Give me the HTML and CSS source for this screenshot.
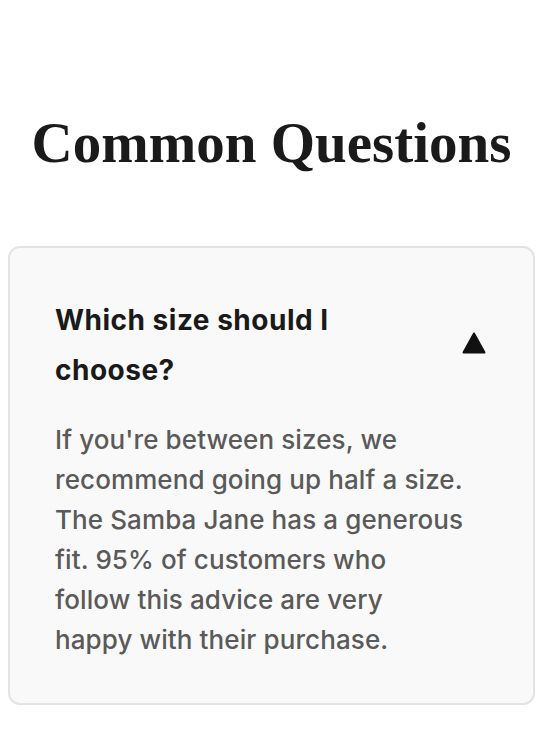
FILE: index.html
```html
<!DOCTYPE html>
<html>
<head>
<meta charset="utf-8">
<link rel="stylesheet" href="styles.css">
</head>
<body>
<main class="page">
  <h1 class="title">Common Questions</h1>
  <section class="faq">
    <div class="faq-head">
      <h2 class="question">Which size should I choose?</h2>
      <svg class="toggle" width="24" height="22" viewBox="0 0 24 22"><path d="M12 1.5 L22.5 20.5 L1.5 20.5 Z" fill="#111" stroke="#111" stroke-width="2" stroke-linejoin="round"/></svg>
    </div>
    <p class="answer">If you're between sizes, we<br> recommend going up half a size.<br> The Samba Jane has a generous<br> fit. 95% of customers who<br> follow this advice are very<br> happy with their purchase.</p>
  </section>
</main>
</body>
</html>
```
FILE: styles.css
```css
html, body { margin: 0; padding: 0; background: #fff; }
.page { padding: 108px 15px 28px 8px; }
.title {
  margin: 0 0 68px;
  font-family: "Liberation Serif", serif;
  font-weight: bold;
  font-size: 57px;
  line-height: 70px;
  color: #1a1a1a;
  text-align: center;
  white-space: nowrap;
}
.faq {
  box-sizing: border-box;
  width: 527px;
  background: #f9f9f9;
  border: 2px solid #e3e3e3;
  border-radius: 12px;
  padding: 47px 47px 43px 45px;
}
.faq-head {
  display: flex;
  align-items: center;
  justify-content: space-between;
}
.question {
  margin: 0;
  width: 330px;
  font-family: Inter, "Liberation Sans", sans-serif;
  font-weight: 700;
  font-size: 28px;
  line-height: 50px;
  color: #1a1a1a;
  letter-spacing: 0.5px;
}
.toggle { margin-top: -4px; }
.answer {
  margin: 25px -10px 0 0;
  font-family: Inter, "Liberation Sans", sans-serif;
  font-weight: 500;
  font-size: 26px;
  line-height: 40px;
  color: #5a5a5a;
  letter-spacing: 0.1px;
  white-space: nowrap;
}
```
